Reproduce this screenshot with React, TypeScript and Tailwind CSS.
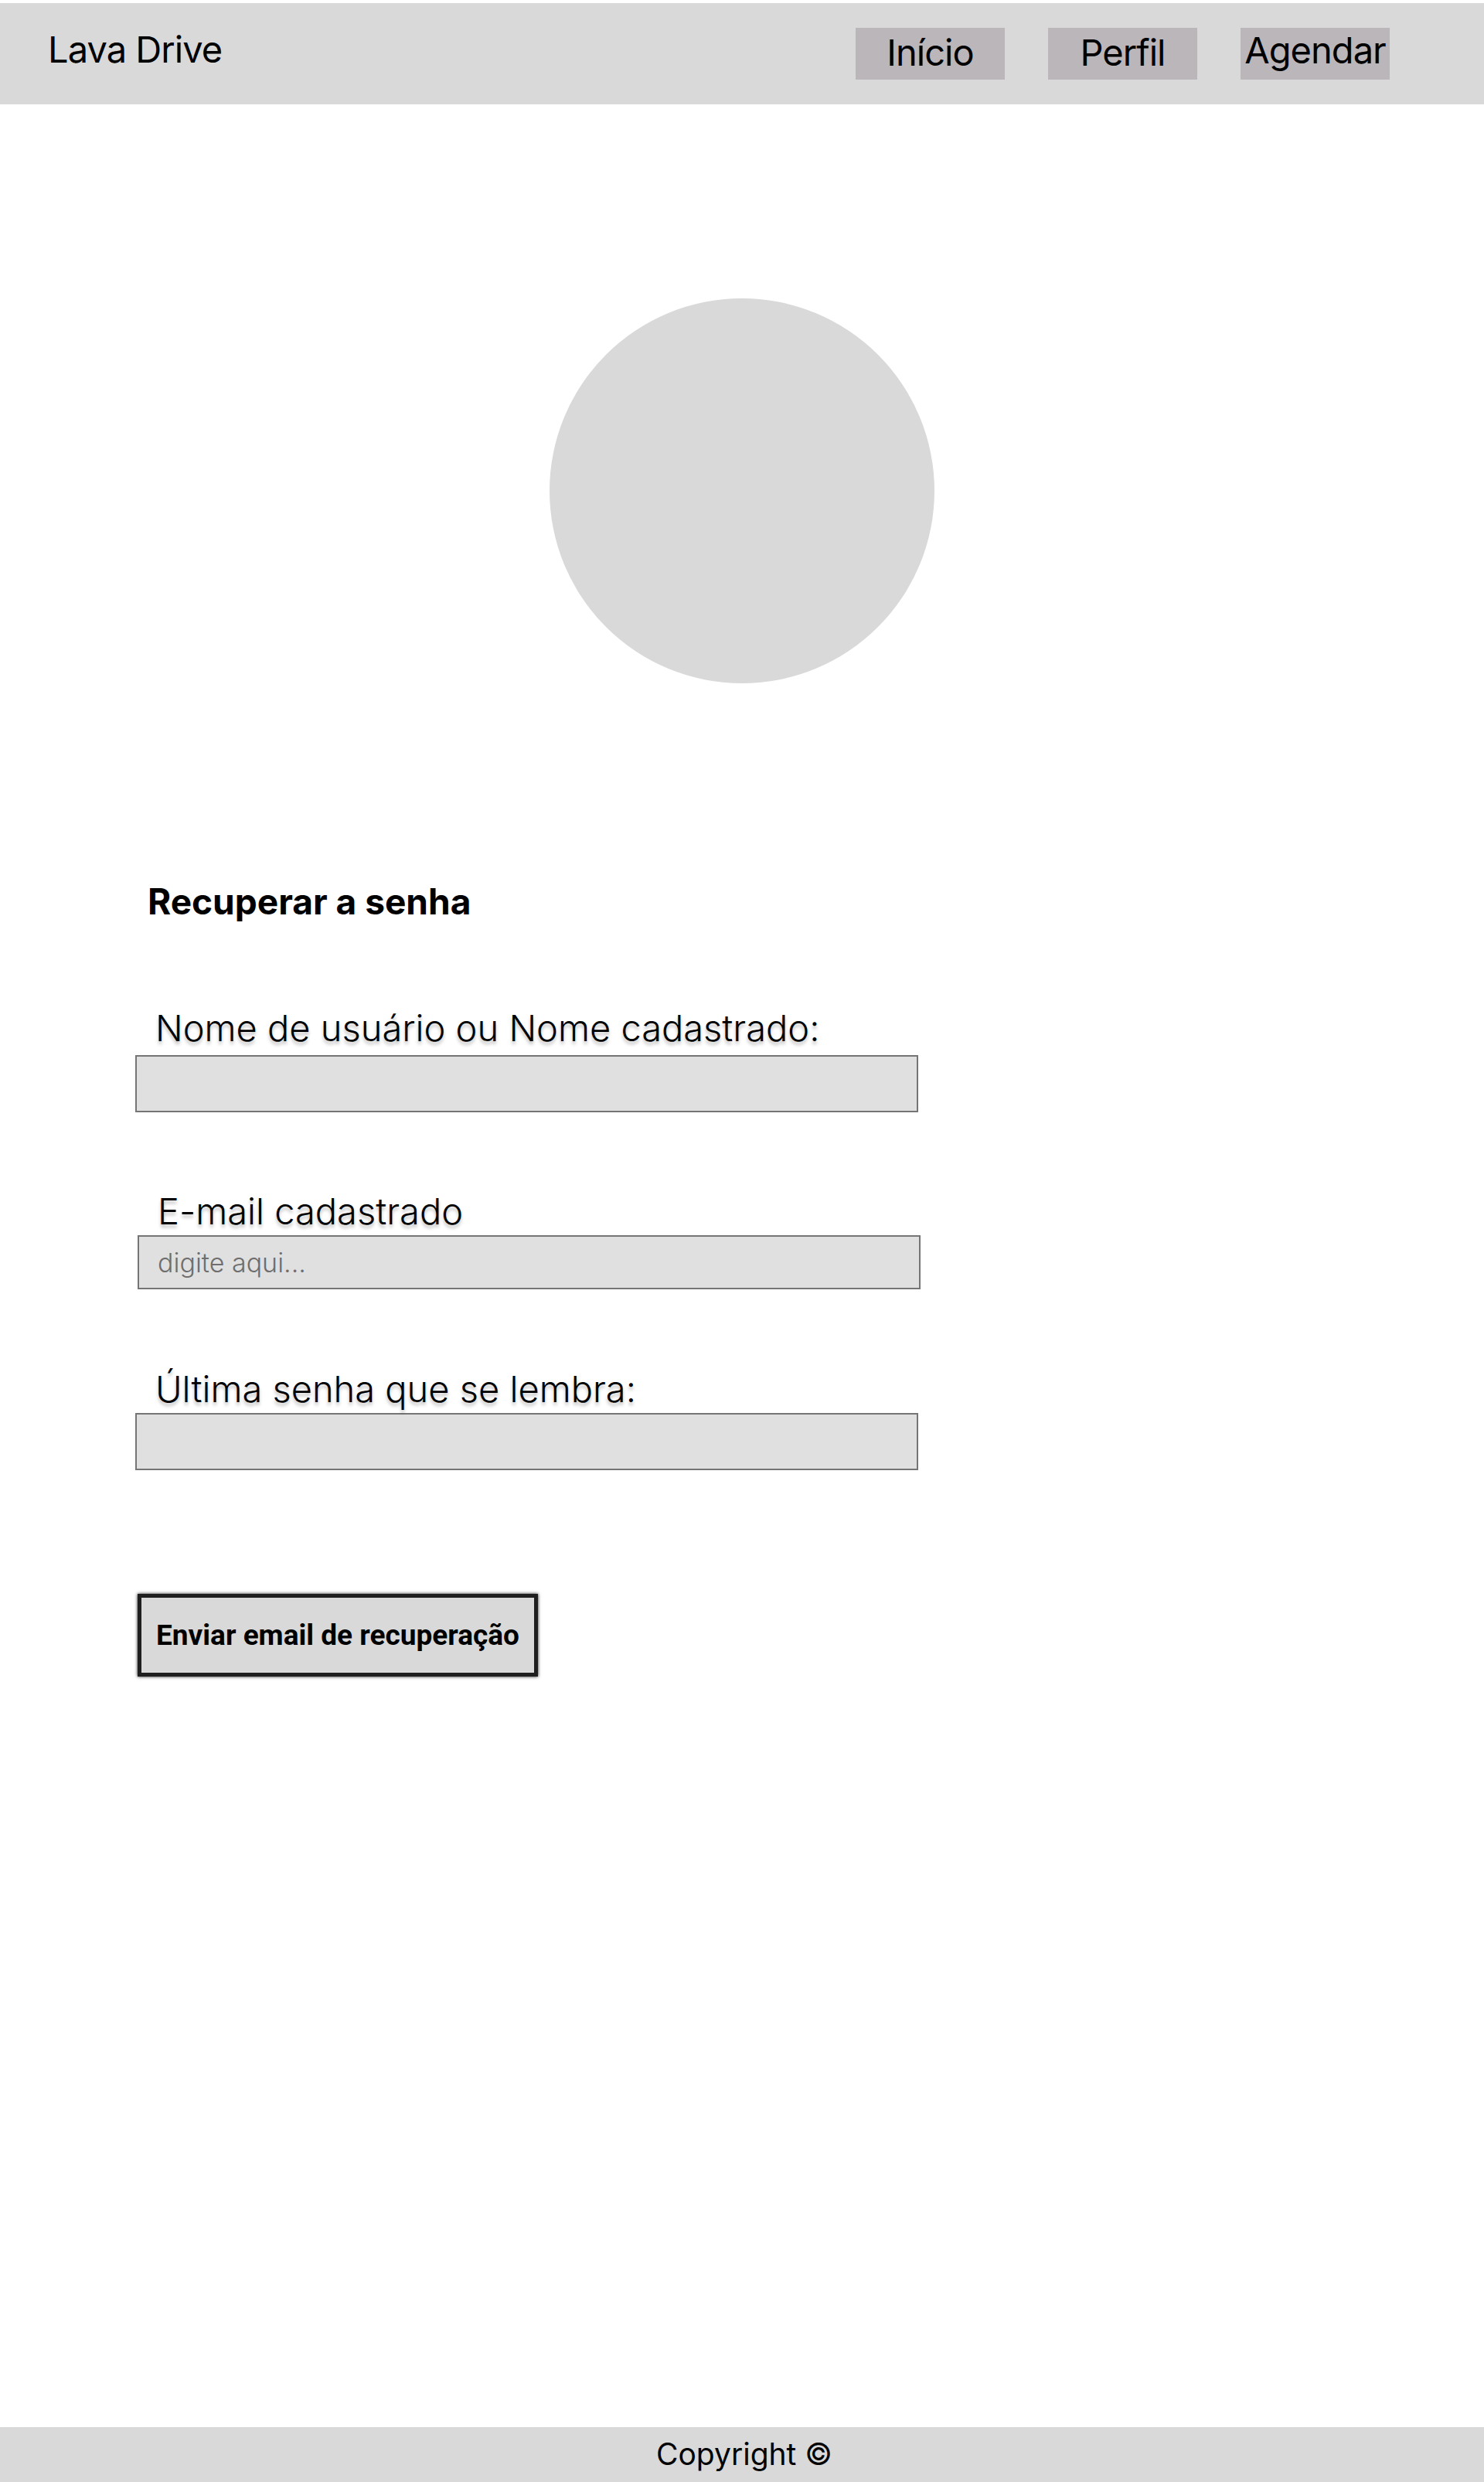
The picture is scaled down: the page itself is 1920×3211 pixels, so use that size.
import React from "react";

const navItems = ["Início", "Perfil", "Agendar"];

function Header() {
  return (
    <header className="h-[131px] bg-[#d9d9d9] flex items-start justify-between pl-[62px] pr-[122px]">
      <span className="pt-[31px] text-[47px] leading-[58px] tracking-[-0.02em] text-black">Lava Drive</span>
      <nav className="flex gap-[56px] pt-[32px]">
        {navItems.map((item) => (
          <a
            key={item}
            href="#"
            className={
              item === "Agendar"
                ? "w-[193px] h-[67px] bg-[#bab6b9] text-center text-[47px] leading-[58px] tracking-[-0.02em] text-black whitespace-nowrap"
                : "w-[193px] h-[67px] pt-[3px] bg-[#bab6b9] text-center text-[47px] leading-[58px] tracking-[-0.02em] text-black"
            }
          >
            {item}
          </a>
        ))}
      </nav>
    </header>
  );
}

function Field({
  label,
  placeholder,
  className,
  inputHeight = "h-[74px]",
  inputGap = "mt-[6px]",
}: {
  label: string;
  placeholder?: string;
  className: string;
  inputHeight?: string;
  inputGap?: string;
}) {
  return (
    <div className={className}>
      <label className="block pl-[26px] text-[47px] leading-[58px] font-light text-black [text-shadow:0_4px_4px_rgba(0,0,0,0.25)]">
        {label}
      </label>
      <input
        readOnly
        placeholder={placeholder}
        className={`block ${inputGap} w-[1013px] ${inputHeight} bg-[#e0e0e0] border-2 border-[#757575] pl-[24px] text-[34px] font-light text-black placeholder:text-[#6e6e6e] outline-none`}
      />
    </div>
  );
}

export default function App() {
  return (
    <div className="min-h-[3211px] flex flex-col bg-white pt-[4px] font-[Inter,sans-serif]">
      <Header />

      <main className="flex flex-col">
        {/* Avatar */}
        <div className="mt-[251px] mx-auto w-[498px] h-[498px] rounded-full bg-[#d9d9d9]" />

        {/* Form */}
        <section className="pl-[175px] mt-[255px]">
          <h1 className="pl-[16px] text-[46px] leading-[55px] font-bold text-black">Recuperar a senha</h1>

          <Field className="mt-[107px]" label="Nome de usuário ou Nome cadastrado:" />
          <Field
            className="mt-[99px] ml-[3px]"
            label="E-mail cadastrado"
            placeholder="digite aqui..."
            inputHeight="h-[70px]"
            inputGap="mt-[2px]"
          />
          <Field className="mt-[100px]" label="Última senha que se lembra:" inputGap="mt-[2px]" />

          <button className="mt-[160px] ml-[3px] w-[518px] h-[107px] bg-[#d9d9d9] border-[5px] border-[#1f1f1f] shadow-[0_0_4px_rgba(0,0,0,0.9)] font-[Roboto,sans-serif] text-[37px] font-bold text-black">
            Enviar email de recuperação
          </button>
        </section>
      </main>

      <footer className="mt-auto h-[71px] bg-[#d9d9d9] flex items-center justify-center pl-[6px] text-[39px] text-black">
        Copyright ©
      </footer>
    </div>
  );
}
